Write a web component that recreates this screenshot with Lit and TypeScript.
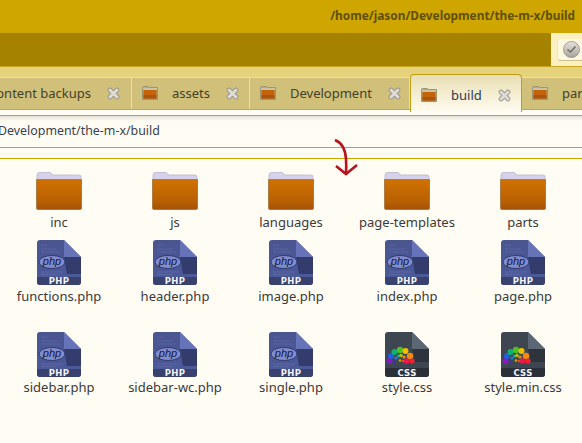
import { LitElement, html, css, svg } from "lit";
import { customElement } from "lit/decorators.js";

const tabFolder = html`<svg class="tabfolder" viewBox="0 0 16 14" width="16" height="14">
  <path d="M0.5 1.5 Q0.5 .5 1.5 .5 H6.5 L7.5 1.5 H15.5 V13.5 H.5Z" fill="#b5ab80" stroke="#9d9674" stroke-width="1"/>
  <rect x="1" y="2" width="14" height="2" fill="#c9c3a8"/>
  <rect x="1.5" y="4" width="13" height="8.5" fill="#c4630a"/>
  <rect x="1.5" y="9" width="13" height="3.5" fill="#a9550c"/>
</svg>`;

const close = html`<svg class="close" viewBox="0 0 13 13" width="13" height="13">
  <path d="M3 3 L10 10 M10 3 L3 10" stroke="#94928a" stroke-width="4.6" stroke-linecap="round"/>
  <path d="M3 3 L10 10 M10 3 L3 10" stroke="#dedcd4" stroke-width="3" stroke-linecap="round"/>
</svg>`;

const bigFolder = html`<svg viewBox="0 0 46 38" width="46" height="38" class="icon">
  <defs><linearGradient id="fo" x1="0" y1="0" x2="0" y2="1"><stop offset="0" stop-color="#cf7200"/><stop offset=".75" stop-color="#b85f04"/><stop offset="1" stop-color="#a45208"/></linearGradient></defs>
  <path d="M1 9 V3 Q1 .5 3.5 .5 H14 L17 3 H43 Q45 3 45 5 V10Z" fill="#d6d2ee" stroke="#b9b6c4" stroke-width=".8"/>
  <path d="M.5 7.5 H45.5 V36 Q45.5 37.5 44 37.5 H2 Q.5 37.5 .5 36Z" fill="url(#fo)" stroke="#ab7c44" stroke-width="1"/>
</svg>`;

const phpIcon = html`<svg viewBox="0 0 44 45" width="44" height="45" class="icon">
  <defs><linearGradient id="pb" x1="0" y1="0" x2="0" y2="1"><stop offset="0" stop-color="#4a5590"/><stop offset="1" stop-color="#4c5a9c"/></linearGradient></defs>
  <path d="M3 0 H27 L44 17 V42 Q44 45 41 45 H3 Q0 45 0 42 V3 Q0 0 3 0Z" fill="url(#pb)"/>
  <path d="M27 0 L44 17 H27Z" fill="#6773b8"/>
  <path d="M27 17 H44 V34 H30 Z" fill="#333c6c"/>
  <g stroke="#6b76ac" stroke-width=".7" opacity=".7">
    <path d="M4 5 H10 M4 9 H20 M4 12 H23 M4 32 H26 M4 34.5 H20"/>
  </g>
  <ellipse cx="15" cy="22" rx="13" ry="6.5" fill="#7f8cd0" stroke="#2f3768" stroke-width=".9"/>
  <text x="15" y="25" text-anchor="middle" class="phpt">php</text>
  <path d="M0 37 H44 V42 Q44 45 41 45 H3 Q0 45 0 42Z" fill="#39416e"/>
  <text x="22" y="44" text-anchor="middle" class="band">PHP</text>
</svg>`;

const dots: [number, number, number, string][] = [
  [4.5, 29, 3, "#8a1ac0"], [6, 24, 3, "#1f5fe0"], [9.5, 20, 3, "#10b070"], [15, 18, 3.2, "#50c020"],
  [20.5, 19, 3, "#f0c000"], [25, 24, 3.2, "#f58a10"], [27, 29, 2.6, "#f02030"], [21.5, 29, 2.8, "#e81850"],
  [11, 26, 1.6, "#2080d0"], [13.5, 24, 1.5, "#20b080"], [16, 23.5, 1.8, "#b0c010"], [19, 25, 1.6, "#f09010"],
  [9, 30, 1.3, "#4030c0"], [15, 28.5, 1.3, "#e0a000"], [18, 29, 1.2, "#f05010"],
];

const cssIcon = html`<svg viewBox="0 0 44 45" width="44" height="45" class="icon">
  <path d="M3 0 H27 L44 17 V42 Q44 45 41 45 H3 Q0 45 0 42 V3 Q0 0 3 0Z" fill="#3e4652"/>
  <path d="M27 0 L44 17 H27Z" fill="#5b6775"/>
  <path d="M27 17 H44 V30 H30Z" fill="#2f343c"/>
  ${dots.map(([x, y, r, c]) => svg`<circle cx=${x} cy=${y} r=${r} fill=${c}/>`)}
  <path d="M0 36 H44 V42 Q44 45 41 45 H3 Q0 45 0 42Z" fill="#2b3038"/>
  <text x="22" y="44" text-anchor="middle" class="band">CSS</text>
</svg>`;

const items = [
  ["inc", bigFolder, "f"], ["js", bigFolder, "f"], ["languages", bigFolder, "f"], ["page-templates", bigFolder, "f"], ["parts", bigFolder, "f"],
  ["functions.php", phpIcon, "p"], ["header.php", phpIcon, "p"], ["image.php", phpIcon, "p"], ["index.php", phpIcon, "p"], ["page.php", phpIcon, "p"],
  ["sidebar.php", phpIcon, "p"], ["sidebar-wc.php", phpIcon, "p"], ["single.php", phpIcon, "p"], ["style.css", cssIcon, "p"], ["style.min.css", cssIcon, "p"],
] as const;

const tabs = [
  { name: "ontent backups", w: 132, first: true },
  { name: "assets", w: 118 },
  { name: "Development", w: 160 },
  { name: "build", w: 112, active: true },
  { name: "parts", w: 100 },
];

@customElement("app-root")
export class AppRoot extends LitElement {
  static styles = css`
    :host { display: block; width: 582px; height: 443px; overflow: hidden; position: relative; background: #fffcf4;
      font-family: "Noto Sans", "DejaVu Sans", sans-serif; color: #3c3c3c; }
    .title { height: 33px; background: #cfa600; display: flex; justify-content: flex-end; align-items: center;
      padding: 0 7px 4px 0; box-sizing: border-box; font-size: 11.85px; font-weight: 700; color: #5f5000; }
    .toolbar { height: 34px; background: #a58200; display: flex; justify-content: flex-end; box-sizing: border-box; border-bottom: 1px solid #c4a520; }
    .chip { width: 31px; background: #fdf0c0; box-sizing: border-box; padding: 6px 0 6px 7px; }
    .btn { height: 21px; background: #fff8e0; border-radius: 2px 0 0 2px; box-shadow: 0 1px 0 #cdbf8c, -1px 0 0 #f0e4b8; display: flex; align-items: center; padding-left: 5px; }
    .strip { height: 10px; background: #e5d27a; }
    .tabs { height: 33px; background: #d0c07a; border-top: 1px solid #ebe0a4; border-bottom: 1px solid #c4a838; box-sizing: border-box; display: flex; position: relative; }
    .tabs-inner { display: flex; align-items: stretch; height: 100%; }
    .tab { box-sizing: border-box; display: flex; align-items: center; padding: 0 0 1px 10px; border-right: 1px solid #ebe0a4; font-size: 13px; color: #45402a; flex: none; white-space: nowrap; }
    .tab svg { flex: none; }
    .tab.first { justify-content: flex-end; padding: 0 11px 1px 0; overflow: hidden; }
    .tab .label { margin: 0 16px 0 14px; flex: none; }
    .tab.first .label { margin-left: 0; }
    .tab.active { height: 38px; margin-top: -4px; position: relative; background: linear-gradient(#e8deb2, #fffcf0); border: 1px solid #c0a012; border-bottom: none; border-radius: 4px 4px 0 0; color: #2f3a50; padding: 3px 0 0 10px; }
    .gap { height: 5px; background: #fffcf4; }
    .path { height: 33px; box-sizing: border-box; border-top: 1px solid #cca400; border-bottom: 1px solid #cca400; background: linear-gradient(#e4e0d4, #fffcf4 5px); font-size: 12.4px; line-height: 30px; color: #3a3f50; white-space: nowrap; overflow: hidden; }
    .path span { margin-left: -2px; display: inline-block; }
    .sub { height: 11px; box-sizing: border-box; border-bottom: 1px solid #cca400; }
    .grid { display: grid; grid-template-columns: repeat(5, 116px); grid-template-rows: 68px 92px 92px; margin: 13px 0 0 1px; }
    .cell { display: flex; flex-direction: column; align-items: center; font-size: 13px; line-height: 18px; color: #3a3a3a; white-space: nowrap; }
    .icon { display: block; flex: none; }
    .f .icon { margin-bottom: 3px; }
    .p .icon { margin-bottom: 2px; }
    .cell:nth-child(n + 11) .icon { margin-bottom: 1px; }
    .phpt { font: italic 400 11px "Liberation Sans", sans-serif; fill: #14183a; }
    .band { font: 700 8.5px "DejaVu Sans", sans-serif; fill: #f4f4f8; letter-spacing: .3px; }
    .arrow { position: absolute; left: 330px; top: 135px; }
  `;

  render() {
    return html`
      <div class="title">/home/jason/Development/the-m-x/build</div>
      <div class="toolbar"><div class="chip"><div class="btn">
        <svg viewBox="0 0 17 17" width="17" height="17">
          <defs><linearGradient id="ck" x1="0" y1="0" x2="0" y2="1"><stop offset="0" stop-color="#e6e4dc"/><stop offset="1" stop-color="#a6a49c"/></linearGradient></defs>
          <circle cx="8.5" cy="8.5" r="8" fill="url(#ck)" stroke="#8f8d84" stroke-width=".8"/>
          <path d="M4.5 8.5 L7.5 11 L12.5 5.5" fill="none" stroke="#6f6d62" stroke-width="1.6"/>
        </svg></div></div></div>
      <div class="strip"></div>
      <div class="tabs"><div class="tabs-inner">
        ${tabs.map(t => html`<div class="tab ${t.first ? "first" : ""} ${t.active ? "active" : ""}" style="width:${t.w}px">
          ${t.first ? "" : tabFolder}<span class="label">${t.name}</span>${close}</div>`)}
      </div></div>
      <div class="gap"></div>
      <div class="path"><span>Development/the-m-x/build</span></div>
      <div class="sub"></div>
      <div class="grid">
        ${items.map(([n, ic, k]) => html`<div class="cell ${k}">${ic}<span>${n}</span></div>`)}
      </div>
      <svg class="arrow" width="30" height="45" viewBox="0 0 30 45">
        <path d="M5 5 Q15 9 16 24 Q16.5 32 16 38" fill="none" stroke="#b5141c" stroke-width="2.6"/>
        <path d="M6 31 L16 39 L27 30" fill="none" stroke="#b5141c" stroke-width="2.6"/>
      </svg>
    `;
  }
}
